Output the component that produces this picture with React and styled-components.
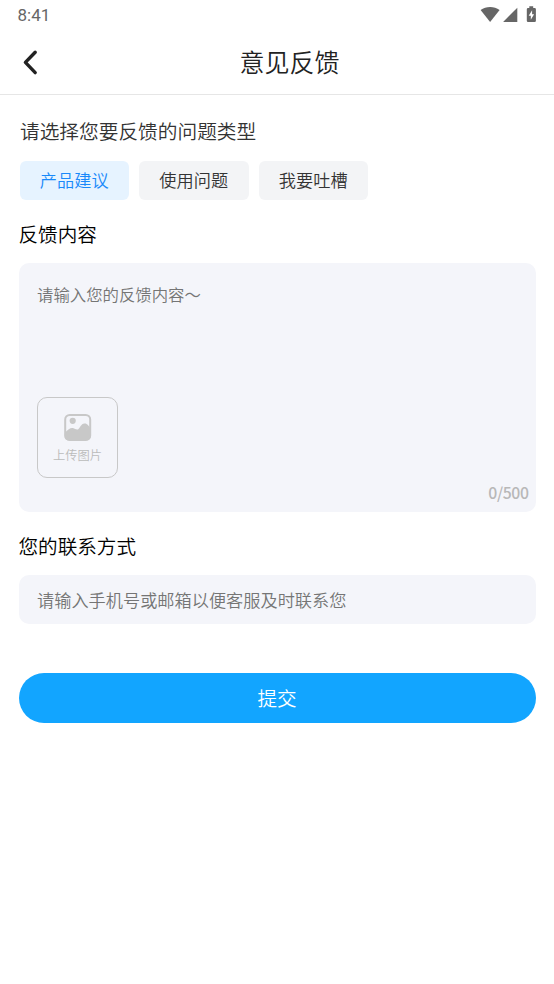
import styled, { createGlobalStyle } from "styled-components";
import { useState } from "react";

const types = ["产品建议", "使用问题", "我要吐槽"];
const MAX_LENGTH = 500;

export default function App() {
  const [type, setType] = useState(types[0]);
  const [content, setContent] = useState("");
  const [contact, setContact] = useState("");

  return (
    <>
      <GlobalStyle />
      <StatusBar>
        <Clock>8:41</Clock>
        <StatusIcons />
      </StatusBar>
      <Header>
        <BackButton aria-label="返回">
          <svg width="18" height="28" viewBox="0 0 18 28" fill="none">
            <path
              d="M14.2 4.2L4.4 14.4L14.2 24.6"
              stroke="#222"
              strokeWidth="3.4"
              strokeLinecap="round"
              strokeLinejoin="round"
            />
          </svg>
        </BackButton>
        <Title>意见反馈</Title>
      </Header>
      <Form>
        <Question>请选择您要反馈的问题类型</Question>
        <Chips>
          {types.map((item) => (
            <Chip key={item} $active={item === type} onClick={() => setType(item)}>
              {item}
            </Chip>
          ))}
        </Chips>
        <Label>反馈内容</Label>
        <ContentCard>
          <ContentInput
            placeholder="请输入您的反馈内容～"
            maxLength={MAX_LENGTH}
            value={content}
            onChange={(e) => setContent(e.target.value)}
          />
          <Upload>
            <ImageIcon />
            <span>上传图片</span>
          </Upload>
          <Counter>
            {content.length}/{MAX_LENGTH}
          </Counter>
        </ContentCard>
        <Label>您的联系方式</Label>
        <ContactInput
          placeholder="请输入手机号或邮箱以便客服及时联系您"
          value={contact}
          onChange={(e) => setContact(e.target.value)}
        />
        <Submit>提交</Submit>
      </Form>
    </>
  );
}

function StatusIcons() {
  return (
    <svg width="58" height="20" viewBox="0 0 58 20" fill="#666">
      {/* wifi */}
      <path d="M0.6 9.9C6.1 5.9 14.1 5.9 19.6 9.9L10.1 21.9Z" />
      {/* signal */}
      <path d="M37.3 7.8V22H23.1Z" />
      {/* battery */}
      <path
        fillRule="evenodd"
        d="M49.3 6.3H53.2V8H54.6Q55.9 8 55.9 9.3V20.7Q55.9 22 54.6 22H48.1Q46.8 22 46.8 20.7V9.3Q46.8 8 48.1 8H49.3ZM52.1 10.2L48.7 15.7H50.8V19.8L54.1 14.2H52.1Z"
      />
    </svg>
  );
}

function ImageIcon() {
  return (
    <svg width="28" height="28" viewBox="0 0 28 28">
      <rect x="1.2" y="1.9" width="25" height="25" rx="4.5" fill="none" stroke="#c8c8c8" strokeWidth="2" />
      <circle cx="8.7" cy="7.8" r="3.1" fill="#c8c8c8" />
      <path
        fill="#c8c8c8"
        d="M1 19.5C4 16.8 6.5 14.6 8.8 15.1C11.2 15.6 12.3 17.2 14 16.4C16 15.3 16.9 10.8 20.4 10.6C23.4 10.4 25 13.3 26.5 15.4V22.9Q26.5 27.4 22 27.4H5.2Q.7 27.4 .7 22.9Z"
      />
    </svg>
  );
}

const GlobalStyle = createGlobalStyle`
  * {
    box-sizing: border-box;
  }
  body {
    margin: 0;
    background: #fff;
    font-family: "Noto Sans CJK SC", sans-serif;
    font-weight: 350;
  }
  button, input, textarea {
    font-family: inherit;
    font-weight: inherit;
    border: none;
    outline: none;
    padding: 0;
    margin: 0;
  }
  svg {
    display: block;
    overflow: visible;
  }
`;

const StatusBar = styled.div`
  display: flex;
  justify-content: space-between;
  height: 30px;
  padding: 0 16px 0 17.5px;
`;

const Clock = styled.span`
  font-family: Roboto, sans-serif;
  font-size: 17px;
  font-weight: 400;
  line-height: 31px;
  color: #666;
`;

const Header = styled.header`
  display: flex;
  align-items: center;
  height: 65px;
  padding: 0 0 1px 21px;
  border-bottom: 1px solid #e6e6e6;
`;

const BackButton = styled.button`
  width: 18px;
  background: none;
`;

const Title = styled.h1`
  flex: 1;
  margin: 0 0 2px -14px;
  text-align: center;
  font-size: 25px;
  font-weight: inherit;
  line-height: 36px;
  color: #222;
`;

const Form = styled.main`
  display: flex;
  flex-direction: column;
  padding: 22px 18.5px 0;
`;

const Question = styled.p`
  margin: 0 0 0 1.5px;
  font-size: 19.7px;
  line-height: 28px;
  color: #333;
`;

const Chips = styled.div`
  display: flex;
  gap: 10px;
  margin: 15.5px 0 0 1px;
`;

const Chip = styled.button`
  width: 109.5px;
  height: 39.5px;
  padding-bottom: 1px;
  border-radius: 6px;
  font-size: 17.2px;
  color: ${(props) => (props.$active ? "#1989fa" : "#333")};
  background: ${(props) => (props.$active ? "#e6f3ff" : "#f3f4f6")};
`;

const Label = styled.h2`
  margin: 20px 0 15px;
  font-size: 19.6px;
  font-weight: inherit;
  line-height: 28px;
  color: #000;
`;

const ContentCard = styled.div`
  display: flex;
  flex-direction: column;
  height: 249px;
  padding: 18px 7px 7px 18.5px;
  border-radius: 10px;
  background: #f4f5fa;
`;

const ContentInput = styled.textarea`
  height: 116px;
  resize: none;
  background: none;
  font-size: 16.4px;
  line-height: 27px;
  color: #333;
  &::placeholder {
    color: #757575;
  }
`;

const Upload = styled.button`
  display: flex;
  flex-direction: column;
  align-items: center;
  width: 81px;
  height: 81px;
  padding-top: 15px;
  border: 1px solid #c8c8c8;
  border-radius: 10px;
  background: none;
  font-size: 12.3px;
  line-height: 18px;
  color: #bbb;
  span {
    margin-top: 5px;
  }
`;

const Counter = styled.span`
  align-self: flex-end;
  margin-top: 4px;
  font-size: 15.8px;
  font-weight: 500;
  letter-spacing: -0.4px;
  line-height: 22px;
  color: #b8b8b8;
`;

const ContactInput = styled.input`
  height: 49px;
  padding: 0 18.5px;
  border-radius: 10px;
  background: #f4f5fa;
  font-size: 17.2px;
  color: #333;
  &::placeholder {
    color: #757575;
  }
`;

const Submit = styled.button`
  height: 49.5px;
  margin-top: 49px;
  padding-bottom: 1px;
  border-radius: 25px;
  font-size: 19.6px;
  color: #fff;
  background: #12a5ff;
`;
